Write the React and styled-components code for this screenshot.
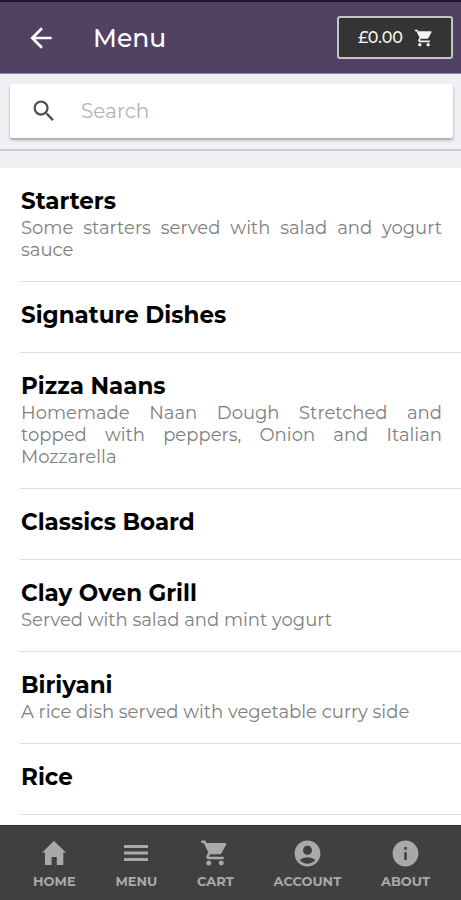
import styled, { createGlobalStyle } from 'styled-components';
import { useState } from 'react';
import {
    MdArrowBack,
    MdSearch,
    MdShoppingCart,
    MdAccountCircle,
    MdInfo,
} from 'react-icons/md';

const GlobalStyle = createGlobalStyle`
    * {
        box-sizing: border-box;
    }

    body {
        margin: 0;
        background: #ffffff;
        font-family: 'Montserrat', Inter, sans-serif;
    }
`;

const Page = styled.div`
    display: flex;
    flex-direction: column;
    min-height: 100vh;
`;

const Header = styled.header`
    display: flex;
    align-items: center;
    padding: 14px 8px 14px 25px;
    background: #514264;
    border-top: 2px solid #22142a;
    border-bottom: 1px solid #8d8598;
`;

const BackButton = styled.button`
    display: flex;
    padding: 0;
    border: none;
    background: none;
    color: #ffffff;
    cursor: pointer;
`;

const Title = styled.h1`
    flex: 1;
    margin: 0 0 0 36px;
    font-size: 25px;
    font-weight: 500;
    line-height: 32px;
    color: #ffffff;
`;

const CartButton = styled.button`
    display: flex;
    align-items: center;
    gap: 11px;
    height: 43px;
    padding: 0 17px 0 19px;
    border: 2px solid #c8c4cb;
    border-radius: 3px;
    background: #353435;
    color: #f4f4f4;
    font-family: inherit;
    font-size: 16px;
    font-weight: 500;
    cursor: pointer;
`;

const SearchArea = styled.div`
    padding: 10px 8px 11px 10px;
    background: #efeff4;
    border-bottom: 2px solid #cbcbd0;
`;

const SearchBox = styled.label`
    display: flex;
    align-items: center;
    gap: 23px;
    height: 54px;
    padding: 0 20px;
    border-radius: 2px;
    background: #ffffff;
    box-shadow: 0 2px 3px rgba(0, 0, 0, 0.32);
    color: #505050;
`;

const SearchInput = styled.input`
    flex: 1;
    min-width: 0;
    padding: 0;
    border: none;
    outline: none;
    background: none;
    font-family: inherit;
    font-size: 20px;
    color: #222222;

    &::placeholder {
        color: #b4b4b4;
        opacity: 1;
    }
`;

const Categories = styled.main`
    flex: 1;
    padding-bottom: 9px;
    border-top: 17px solid #efeff4;
`;

const List = styled.ul`
    margin: 0;
    padding: 0 0 0 20px;
    list-style: none;
`;

const Category = styled.li`
    padding: 18px 19px ${({ $plain }) => ($plain ? '21px' : '20px')} 1px;
    border-bottom: 1px solid #dedede;
`;

const CategoryName = styled.h2`
    margin: 0;
    font-size: 23px;
    font-weight: 700;
    line-height: 31px;
    color: #000000;
`;

const Description = styled.p`
    margin: 0;
    font-size: 18px;
    line-height: 22px;
    text-align: justify;
    color: #808080;
`;

const TabBar = styled.nav`
    position: sticky;
    bottom: 0;
    display: flex;
    justify-content: space-between;
    height: 75px;
    padding: 12px 31px 0 33px;
    background: #404040;
    border-top: 1px solid #2c2c2c;
`;

const Tab = styled.a`
    display: flex;
    flex-direction: column;
    align-items: center;
    gap: 4px;
    color: #aaa8a8;
    font-size: 13px;
    font-weight: 700;
    line-height: 18px;
    text-decoration: none;
`;

const TabIcon = styled.span`
    display: flex;
    align-items: center;
    height: 30px;
`;

// House with a narrow doorway and solid walls
const HomeIcon = ({ size }) => (
    <svg width={size} height={size} viewBox="0 0 24 24" fill="currentColor" aria-hidden="true">
        <path d="M12 0L24 11.5H21.3V24H14.8V16H9.6V24H3V11.5H0Z" />
    </svg>
);

// Three thick bars, heavier than the stock menu icon
const MenuIcon = ({ size }) => (
    <svg width={size} height={size} viewBox="0 0 24 24" fill="currentColor" aria-hidden="true">
        <path d="M0 4h24v3H0zM0 10.5h24v3H0zM0 17h24v3H0z" />
    </svg>
);

const categories = [
    { name: 'Starters', description: 'Some starters served with salad and yogurt sauce' },
    { name: 'Signature Dishes' },
    { name: 'Pizza Naans', description: 'Homemade Naan Dough Stretched and topped with peppers, Onion and Italian Mozzarella' },
    { name: 'Classics Board' },
    { name: 'Clay Oven Grill', description: 'Served with salad and mint yogurt' },
    { name: 'Biriyani', description: 'A rice dish served with vegetable curry side' },
    { name: 'Rice' },
];

const tabs = [
    { label: 'HOME', icon: HomeIcon, size: 24 },
    { label: 'MENU', icon: MenuIcon, size: 24 },
    { label: 'CART', icon: MdShoppingCart, size: 30 },
    { label: 'ACCOUNT', icon: MdAccountCircle, size: 31 },
    { label: 'ABOUT', icon: MdInfo, size: 31 },
];

const App = () => {
    const [search, setSearch] = useState(''); // Text typed in the search box

    const visible = categories.filter(({ name }) =>
        name.toLowerCase().includes(search.toLowerCase())
    );

    return (
        <Page>
            <GlobalStyle />
            <Header>
                <BackButton type="button" aria-label="Back">
                    <MdArrowBack size={32} />
                </BackButton>
                <Title>Menu</Title>
                <CartButton type="button">
                    £0.00
                    <MdShoppingCart size={20} />
                </CartButton>
            </Header>
            <SearchArea>
                <SearchBox>
                    <MdSearch size={28} />
                    <SearchInput
                        type="text"
                        aria-label="Search"
                        placeholder="Search"
                        value={search}
                        onChange={(e) => setSearch(e.target.value)}
                    />
                </SearchBox>
            </SearchArea>
            <Categories>
                <List>
                    {visible.map(({ name, description }) => (
                        <Category key={name} $plain={!description}>
                            <CategoryName>{name}</CategoryName>
                            {description && <Description>{description}</Description>}
                        </Category>
                    ))}
                </List>
            </Categories>
            <TabBar>
                {tabs.map(({ label, icon: Icon, size }) => (
                    <Tab key={label} href={`#${label.toLowerCase()}`}>
                        <TabIcon>
                            <Icon size={size} />
                        </TabIcon>
                        {label}
                    </Tab>
                ))}
            </TabBar>
        </Page>
    );
};

export default App;
